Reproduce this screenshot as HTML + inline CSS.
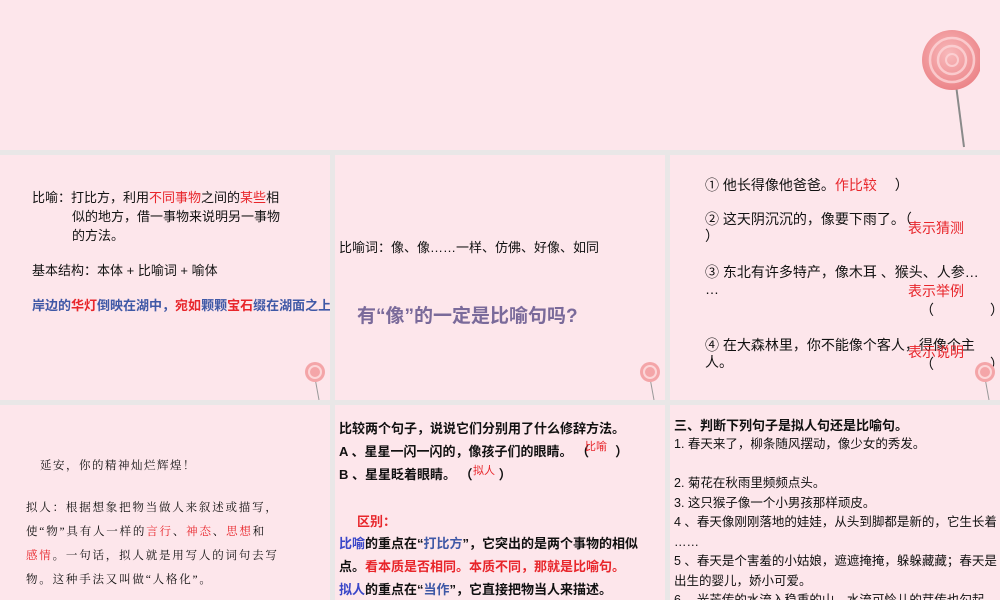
<!DOCTYPE html>
<html><head><meta charset="utf-8"><style>
body{margin:0;width:1000px;height:600px;background:#e9e7e7;position:relative;overflow:hidden;font-family:"Liberation Sans","Noto Sans CJK SC",sans-serif;}
.p{position:absolute;background:#fde6eb;overflow:hidden}
.t{position:absolute;white-space:nowrap;color:#111}
.r{color:#e8262b}.b{color:#3f58a6}.bl{color:#3a46c8}
.lol{position:absolute}
</style></head><body>
<div class="p" style="left:0;top:0;width:1000px;height:150px"></div>
<svg class="lol" style="left:920px;top:25px" width="60" height="125"><defs><radialGradient id="g" cx="45%" cy="40%" r="60%"><stop offset="0" stop-color="#f8b9bb"/><stop offset="1" stop-color="#ec8589"/></radialGradient></defs><line x1="36" y1="60" x2="44" y2="122" stroke="#8a8a8a" stroke-width="2"/><circle cx="32" cy="35" r="30" fill="url(#g)"/><circle cx="32" cy="35" r="22" fill="none" stroke="#fcd6d8" stroke-width="2.5" opacity=".8"/><circle cx="32" cy="35" r="14" fill="none" stroke="#fcd6d8" stroke-width="2.5" opacity=".8"/><circle cx="32" cy="35" r="6" fill="none" stroke="#fcd6d8" stroke-width="2" opacity=".8"/></svg>

<div class="p" style="left:0;top:155px;width:330px;height:245px">
<div class="t" style="left:32px;top:33px;font-size:13px;line-height:19px">比喻：打比方，利用<span class="r">不同事物</span>之间的<span class="r">某些</span>相<br><span style="padding-left:40px">似的地方，借一事物来说明另一事物</span><br><span style="padding-left:40px">的方法。</span></div>
<div class="t" style="left:32px;top:105px;font-size:13px">基本结构：本体 + 比喻词 + 喻体</div>
<div class="t b" style="left:32px;top:140px;font-size:13px;font-weight:bold">岸边的<span class="r">华灯</span>倒映在湖中，<span class="r">宛如</span>颗颗<span class="r">宝石</span>缀在湖面之上。</div>
<svg class="lol" style="left:303px;top:205px" width="24" height="40"><line x1="12" y1="18" x2="16" y2="40" stroke="#999"/><circle cx="12" cy="12" r="10" fill="#f4a5a8"/><circle cx="12" cy="12" r="6" fill="none" stroke="#fcd6d8" stroke-width="2"/></svg>
</div>
<div class="p" style="left:335px;top:155px;width:330px;height:245px">
<div class="t" style="left:4px;top:82px;font-size:13px">比喻词：像、像……一样、仿佛、好像、如同</div>
<div class="t" style="left:22px;top:146px;font-size:19px;font-weight:bold;color:#7a6a9a">有“像”的一定是比喻句吗?</div>
<svg class="lol" style="left:303px;top:205px" width="24" height="40"><line x1="12" y1="18" x2="16" y2="40" stroke="#999"/><circle cx="12" cy="12" r="10" fill="#f4a5a8"/><circle cx="12" cy="12" r="6" fill="none" stroke="#fcd6d8" stroke-width="2"/></svg>
</div>
<div class="p" style="left:670px;top:155px;width:330px;height:245px">
<div class="t" style="left:35px;top:20px;font-size:14px">① 他长得像他爸爸。<span class="r">作比较</span>　 ）</div>
<div class="t" style="left:35px;top:56px;font-size:14px;line-height:17px">② 这天阴沉沉的，像要下雨了。（<br>）</div>
<div class="t r" style="left:238px;top:63px;font-size:14px">表示猜测</div>
<div class="t" style="left:35px;top:109px;font-size:14px;line-height:17px">③ 东北有许多特产，像木耳 、猴头、人参…<br>…</div>
<div class="t r" style="left:238px;top:126px;font-size:14px">表示举例</div>
<div class="t" style="left:250px;top:145px;font-size:14px">（　　　　）</div>
<div class="t" style="left:35px;top:182px;font-size:14px;line-height:17px">④ 在大森林里，你不能像个客人，得像个主<br>人。</div>
<div class="t r" style="left:238px;top:187px;font-size:14px">表示说明</div>
<div class="t" style="left:250px;top:199px;font-size:14px">（　　　　）</div>
<svg class="lol" style="left:303px;top:205px" width="24" height="40"><line x1="12" y1="18" x2="16" y2="40" stroke="#999"/><circle cx="12" cy="12" r="10" fill="#f4a5a8"/><circle cx="12" cy="12" r="6" fill="none" stroke="#fcd6d8" stroke-width="2"/></svg>
</div>

<div class="p" style="left:0;top:405px;width:330px;height:195px;font-family:'Liberation Serif','Noto Serif CJK SC',serif">
<div class="t" style="left:40px;top:52px;font-size:11.5px;letter-spacing:1.5px">延安，你的精神灿烂辉煌！</div>
<div class="t" style="left:26px;top:91px;font-size:11.5px;line-height:24px;letter-spacing:1.8px">拟人：根据想象把物当做人来叙述或描写，<br>使“物”具有人一样的<span class="r">言行</span>、<span class="r">神态</span>、<span class="r">思想</span>和<br><span class="r">感情</span>。一句话，拟人就是用写人的词句去写<br>物。这种手法又叫做“人格化”。</div>
</div>
<div class="p" style="left:335px;top:405px;width:330px;height:195px">
<div class="t" style="left:4px;top:12px;font-size:13px;font-weight:bold;line-height:23px">比较两个句子，说说它们分别用了什么修辞方法。<br>A 、星星一闪一闪的，像孩子们的眼睛。 （　　）<br>B 、星星眨着眼睛。 （　　）</div>
<div class="t r" style="left:250px;top:33px;font-size:11px">比喻</div>
<div class="t r" style="left:138px;top:57px;font-size:11px">拟人</div>
<div class="t r" style="left:22px;top:106px;font-size:13px;font-weight:bold">区别：</div>
<div class="t" style="left:4px;top:127px;font-size:13px;font-weight:bold;line-height:23px"><span class="bl">比喻</span>的重点在“<span class="b">打比方</span>”，它突出的是两个事物的相似<br>点。<span class="r">看本质是否相同。本质不同，那就是比喻句。</span><br><span class="bl">拟人</span>的重点在“<span class="b">当作</span>”，它直接把物当人来描述。</div>
</div>
<div class="p" style="left:670px;top:405px;width:330px;height:195px">
<div class="t" style="left:4px;top:10px;font-size:13px;font-weight:bold">三、判断下列句子是拟人句还是比喻句。</div>
<div class="t" style="left:4px;top:30px;font-size:12.5px;line-height:19.5px">1. 春天来了，柳条随风摆动，像少女的秀发。<br><br>2. 菊花在秋雨里频频点头。<br>3. 这只猴子像一个小男孩那样顽皮。<br>4 、春天像刚刚落地的娃娃，从头到脚都是新的，它生长着<br>……<br>5 、春天是个害羞的小姑娘，遮遮掩掩，躲躲藏藏；春天是<br>出生的婴儿，娇小可爱。<br>6 、光芒传的水流入稳重的山，水流可怜儿的芽传也勾起</div>
</div>
</body></html>
